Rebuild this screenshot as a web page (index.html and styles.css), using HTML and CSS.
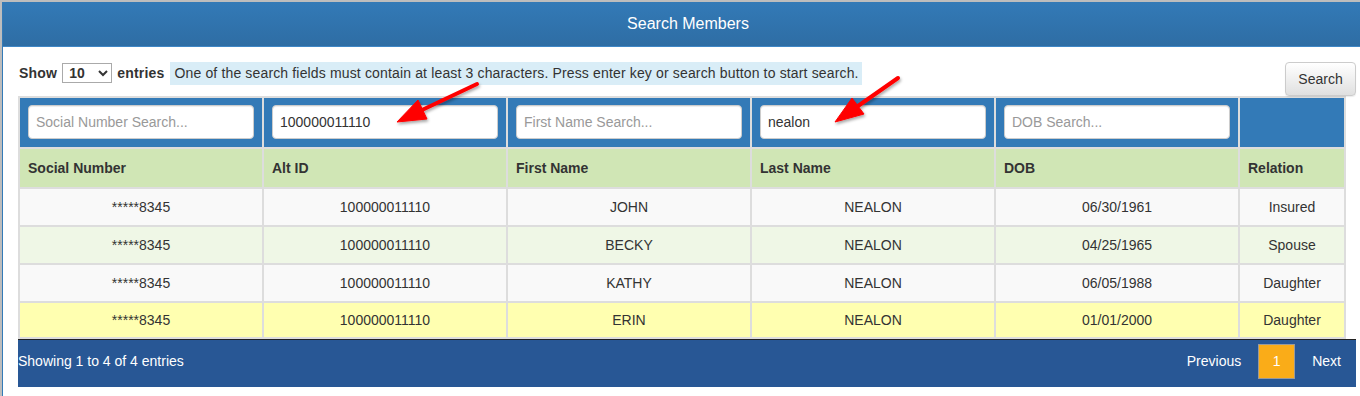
FILE: index.html
```html
<!DOCTYPE html>
<html lang="en">
<head>
  <meta charset="UTF-8" />
  <title>Search Members</title>
  <link rel="stylesheet" href="styles.css">
</head>
<body>
  <div class="panel">
    <div class="panel-heading">Search Members</div>
    <div class="panel-body">
      <div class="toolbar">
        <div class="length">
          <label>Show
            <select>
              <option>10</option>
            </select>
            entries</label>
          <span class="hint">One of the search fields must contain at least 3 characters. Press enter key or search button to start search.</span>
        </div>
        <button class="search-btn">Search</button>
      </div>

      <table class="members">
        <colgroup>
          <col style="width:244px"><col style="width:244px"><col style="width:244px">
          <col style="width:244px"><col style="width:244px"><col>
        </colgroup>
        <thead>
          <tr class="filters">
            <th><input type="text" placeholder="Social Number Search..."></th>
            <th><input type="text" value="100000011110"></th>
            <th><input type="text" placeholder="First Name Search..."></th>
            <th><input type="text" value="nealon"></th>
            <th><input type="text" placeholder="DOB Search..."></th>
            <th></th>
          </tr>
          <tr class="titles">
            <th>Social Number</th>
            <th>Alt ID</th>
            <th>First Name</th>
            <th>Last Name</th>
            <th>DOB</th>
            <th>Relation</th>
          </tr>
        </thead>
        <tbody>
          <tr class="odd">
            <td>*****8345</td><td>100000011110</td><td>JOHN</td><td>NEALON</td><td>06/30/1961</td><td>Insured</td>
          </tr>
          <tr class="even">
            <td>*****8345</td><td>100000011110</td><td>BECKY</td><td>NEALON</td><td>04/25/1965</td><td>Spouse</td>
          </tr>
          <tr class="odd">
            <td>*****8345</td><td>100000011110</td><td>KATHY</td><td>NEALON</td><td>06/05/1988</td><td>Daughter</td>
          </tr>
          <tr class="selected">
            <td>*****8345</td><td>100000011110</td><td>ERIN</td><td>NEALON</td><td>01/01/2000</td><td>Daughter</td>
          </tr>
        </tbody>
      </table>

      <div class="table-footer">
        <div class="info">Showing 1 to 4 of 4 entries</div>
        <div class="paging">
          <a href="#">Previous</a>
          <a href="#" class="current">1</a>
          <a href="#">Next</a>
        </div>
      </div>
    </div>
  </div>

  <!-- annotation arrows drawn over the screenshot -->
  <svg class="arrows" width="1360" height="396" viewBox="0 0 1360 396">
    <defs>
      <filter id="shadow" x="-20%" y="-20%" width="140%" height="140%">
        <feDropShadow dx="1" dy="2" stdDeviation="1.5" flood-color="#000" flood-opacity="0.35"/>
      </filter>
    </defs>
    <g fill="#f00" stroke="#f00" filter="url(#shadow)">
      <line x1="477" y1="84" x2="422" y2="110" stroke-width="4" stroke-linecap="round"/>
      <polygon points="397,122 427,119 418,100" stroke-width="1" stroke-linejoin="round"/>
      <line x1="898" y1="78" x2="858" y2="106" stroke-width="4" stroke-linecap="round"/>
      <polygon points="835,122 864,114 852,98" stroke-width="1" stroke-linejoin="round"/>
    </g>
  </svg>
</body>
</html>
```

FILE: styles.css
```css
body {
  margin: 0;
  padding: 2px 0 0 2px;
  background-color: #bdbdbd;
  font-family: "Liberation Sans", Arial, sans-serif;
  font-size: 14px;
  color: #333;
  height: 394px;
  overflow: hidden;
  position: relative;
}

.panel {
  width: 1370px;
  height: 420px;
  background-color: #fff;
  border: 1px solid #337ab7;
  border-top: none;
}

.panel-heading {
  height: 44px;
  line-height: 44px;
  text-align: center;
  color: #fff;
  font-size: 16px;
  background: linear-gradient(to bottom, #337ab7 0%, #2e6da4 100%);
  border-bottom: 1px solid #3f87c6;
}

.panel-body {
  width: 1338px;
  padding: 15px 0 0 15px;
}

.toolbar {
  display: flex;
  justify-content: space-between;
  align-items: flex-start;
}

.length {
  display: flex;
  align-items: center;
  height: 22px;
}

.length label {
  font-weight: bold;
  display: flex;
  align-items: center;
  gap: 5px;
  margin-left: 1px;
  letter-spacing: 0.2px;
}

.length select {
  width: 50px;
  height: 20px;
  font-family: "Liberation Sans", Arial, sans-serif;
  font-size: 14px;
  font-weight: bold;
  color: #333;
  border: 1px solid #aaa;
  background-color: #fff;
  padding: 0 2px;
}

.hint {
  margin-left: 6px;
  background-color: #d9edf7;
  padding: 3px 3px 3px 4px;
  line-height: 17px;
  letter-spacing: 0.15px;
}

.search-btn {
  width: 71px;
  height: 34px;
  font-family: "Liberation Sans", Arial, sans-serif;
  font-size: 14px;
  color: #333;
  background: linear-gradient(to bottom, #fff 0%, #e0e0e0 100%);
  border: 1px solid #ccc;
  border-radius: 4px;
  box-shadow: 0 1px 1px rgba(0, 0, 0, 0.08);
  padding: 0;
}

.members {
  width: 1328px;
  table-layout: fixed;
  border-collapse: collapse;
  border: 2px solid #ddd;
}

.members th,
.members td {
  border: 2px solid #ddd;
}

.filters th {
  background-color: #337ab7;
  padding: 7px 8px 8px 8px;
  height: 34px;
}

.filters input {
  width: 100%;
  height: 34px;
  box-sizing: border-box;
  border: 1px solid #ccc;
  border-radius: 4px;
  padding: 6px 7px;
  font-family: "Liberation Sans", Arial, sans-serif;
  font-size: 14px;
  color: #333;
  background-color: #fff;
  box-shadow: inset 0 1px 1px rgba(0, 0, 0, 0.075);
}

.filters input::placeholder {
  color: #999;
}

.titles th {
  background-color: #d0e6b5;
  text-align: left;
  font-weight: bold;
  padding: 0 8px;
  height: 38px;
}

.members td {
  text-align: center;
  height: 36px;
  padding: 0 8px;
}

.members tr.odd td {
  background-color: #f9f9f9;
}

.members tr.even td {
  background-color: #eff7e6;
}

.members tr.selected td {
  background-color: #ffffb0;
  height: 34px;
}

.table-footer {
  display: flex;
  justify-content: space-between;
  align-items: center;
  box-sizing: border-box;
  height: 48px;
  padding-bottom: 5px;
  background-color: #285795;
  border-top: 1px solid #222;
  color: #fff;
}

.paging {
  display: flex;
  align-items: center;
  gap: 17px;
  margin-right: 15px;
}

.paging a {
  color: #fff;
  text-decoration: none;
}

.paging a.current {
  display: block;
  width: 35px;
  height: 33px;
  line-height: 33px;
  text-align: center;
  background-color: #faac18;
  border: 1px solid #9a9a9a;
}

.arrows {
  position: absolute;
  top: 0;
  left: 0;
  pointer-events: none;
}
```
